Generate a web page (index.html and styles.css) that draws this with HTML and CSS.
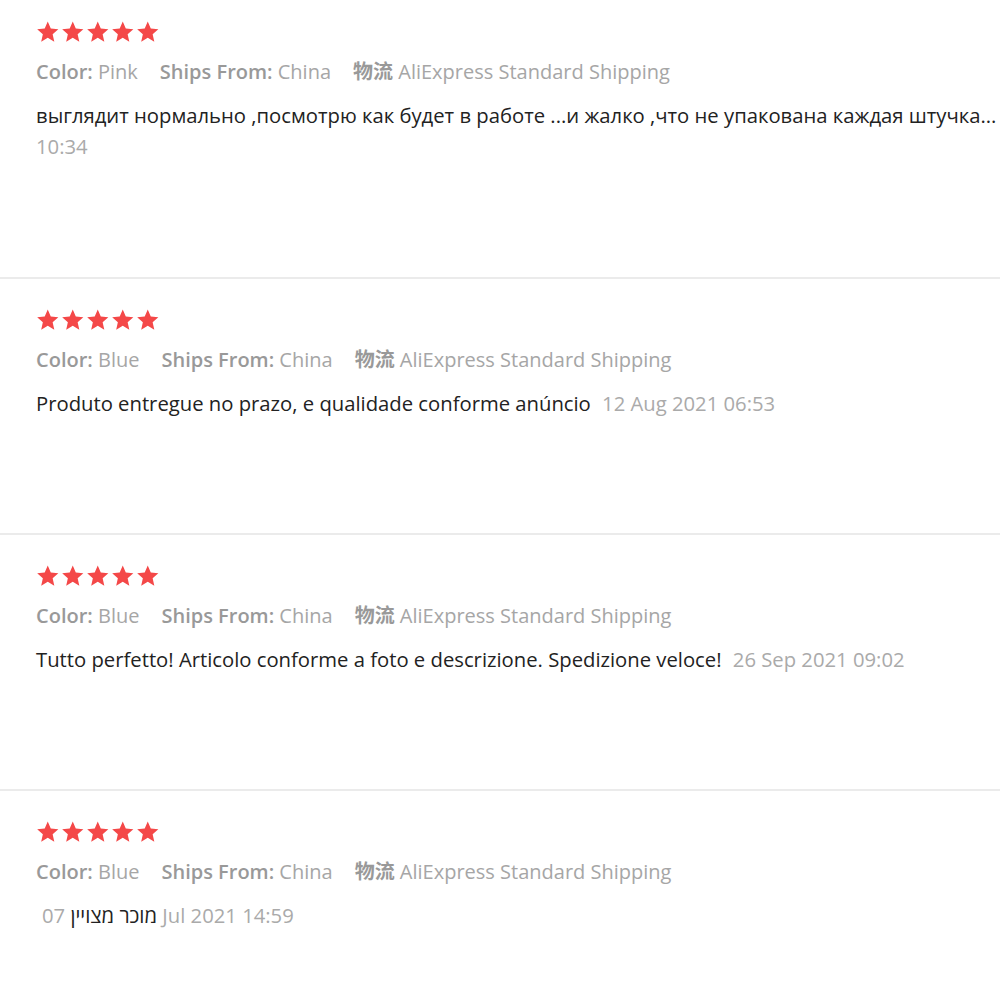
FILE: index.html
```html
<!DOCTYPE html>
<html lang="en">
<head>
<meta charset="utf-8">
<title>Reviews</title>
<link rel="stylesheet" href="styles.css">
</head>
<body>
<svg width="0" height="0" class="defs" aria-hidden="true">
  <defs>
    <symbol id="star" viewBox="0 0 24 24">
      <path d="M12 1.6l3.1 7.1 7.7.7-5.8 5.1 1.7 7.6L12 18.1l-6.7 4 1.7-7.6-5.8-5.1 7.7-.7z"/>
    </symbol>
  </defs>
</svg>
<div class="reviews">
  <div class="review">
    <div class="stars">
      <svg class="star"><use href="#star"/></svg><svg class="star"><use href="#star"/></svg><svg class="star"><use href="#star"/></svg><svg class="star"><use href="#star"/></svg><svg class="star"><use href="#star"/></svg>
    </div>
    <div class="meta">
      <span class="item"><b>Color:</b> Pink</span>
      <span class="item"><b>Ships From:</b> China</span>
      <span class="item"><b>物流</b> AliExpress Standard Shipping</span>
    </div>
    <div class="text"><span class="nowrap">выглядит нормально ,посмотрю как будет в работе ...и жалко ,что не упакована каждая штучка...</span> <span class="date date-wrapped">10:34</span></div>
  </div>
  <div class="review">
    <div class="stars">
      <svg class="star"><use href="#star"/></svg><svg class="star"><use href="#star"/></svg><svg class="star"><use href="#star"/></svg><svg class="star"><use href="#star"/></svg><svg class="star"><use href="#star"/></svg>
    </div>
    <div class="meta">
      <span class="item"><b>Color:</b> Blue</span>
      <span class="item"><b>Ships From:</b> China</span>
      <span class="item"><b>物流</b> AliExpress Standard Shipping</span>
    </div>
    <div class="text">Produto entregue no prazo, e qualidade conforme anúncio <span class="date">12 Aug 2021 06:53</span></div>
  </div>
  <div class="review">
    <div class="stars">
      <svg class="star"><use href="#star"/></svg><svg class="star"><use href="#star"/></svg><svg class="star"><use href="#star"/></svg><svg class="star"><use href="#star"/></svg><svg class="star"><use href="#star"/></svg>
    </div>
    <div class="meta">
      <span class="item"><b>Color:</b> Blue</span>
      <span class="item"><b>Ships From:</b> China</span>
      <span class="item"><b>物流</b> AliExpress Standard Shipping</span>
    </div>
    <div class="text">Tutto perfetto! Articolo conforme a foto e descrizione. Spedizione veloce! <span class="date">26 Sep 2021 09:02</span></div>
  </div>
  <div class="review">
    <div class="stars">
      <svg class="star"><use href="#star"/></svg><svg class="star"><use href="#star"/></svg><svg class="star"><use href="#star"/></svg><svg class="star"><use href="#star"/></svg><svg class="star"><use href="#star"/></svg>
    </div>
    <div class="meta">
      <span class="item"><b>Color:</b> Blue</span>
      <span class="item"><b>Ships From:</b> China</span>
      <span class="item"><b>物流</b> AliExpress Standard Shipping</span>
    </div>
    <div class="text">מוכר מצויין <span class="date">07 Jul 2021 14:59</span></div>
  </div>
</div>
</body>
</html>
```
FILE: styles.css
```css
html, body {
  margin: 0;
  padding: 0;
  background: #fff;
}
body {
  font-family: "Open Sans", "Noto Sans CJK SC", sans-serif;
  font-size: 20.25px;
  color: #222;
  overflow: hidden;
}
.defs {
  position: absolute;
  width: 0;
  height: 0;
}
.reviews {
  margin-top: -9px;
}
.review {
  padding: 30px 0 114px 36px;
  border-bottom: 2px solid #ebebeb;
}
.review:first-child {
  padding-bottom: 115px;
}
.stars {
  display: flex;
  gap: 1.6px;
  height: 22px;
  align-items: center;
}
.star {
  width: 23.5px;
  height: 23.5px;
  fill: #f44848;
}
.meta {
  margin-top: 14px;
  font-size: 20px;
  line-height: 30px;
  color: #a6a6a6;
  display: flex;
  gap: 22px;
  white-space: nowrap;
}
.meta b {
  font-weight: 600;
  color: #999;
}
.text {
  margin-top: 13px;
  line-height: 31px;
  color: #222;
}
.nowrap {
  white-space: nowrap;
}
.date {
  color: #aaa;
  margin-left: 6px;
}
.date-wrapped {
  margin-left: 0;
}
```
